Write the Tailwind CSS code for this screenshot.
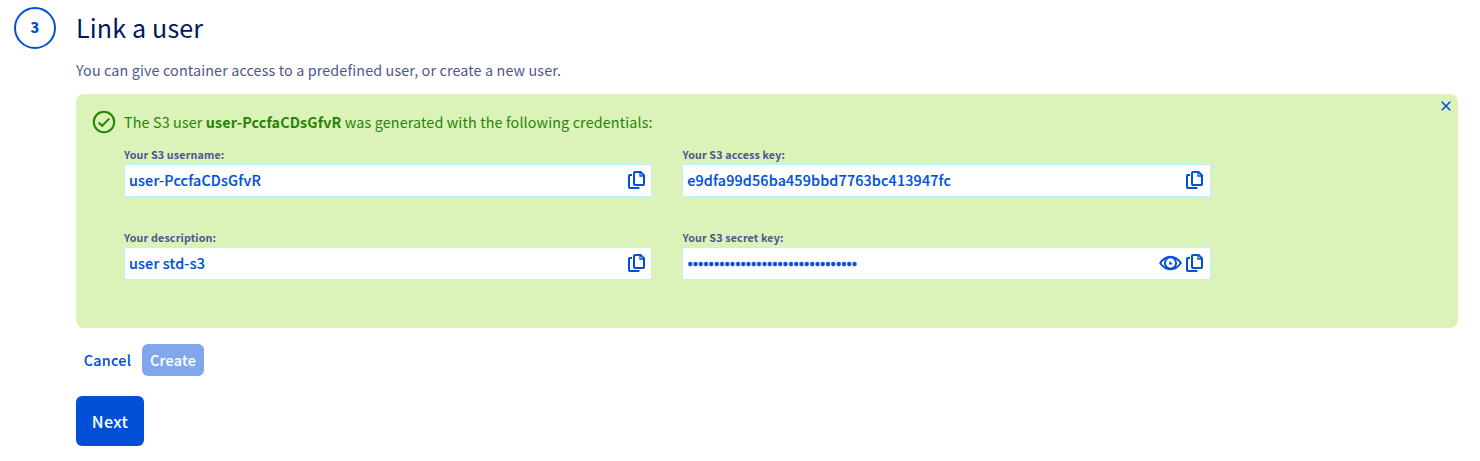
<!DOCTYPE html>
<html lang="en">
<head>
<meta charset="utf-8">
<title>Link a user</title>
<script src="https://cdn.jsdelivr.net/npm/@tailwindcss/browser@4"></script>
</head>
<body class="bg-white font-['Noto_Sans_CJK_SC',sans-serif] text-[14.32px] leading-6 tracking-[0.14px] text-[#4d5592]">
<svg class="hidden">
  <symbol id="copy" viewBox="0 0 17 18" fill="none" stroke="currentColor" stroke-width="2">
    <path d="M4 4H1.8Q1 4 1 4.8V16.2Q1 17 1.8 17H11.4"/>
    <path d="M7 1H12.6L16 4.4V13.2Q16 14 15.2 14H7Q6 14 6 13V2Q6 1 7 1Z"/>
    <path d="M12 1V5H16" stroke-width="1.3"/>
  </symbol>
</svg>
<main class="flex gap-5 pl-3.5 pr-[22px] pt-[7px]">
  <div class="flex size-[42px] shrink-0 items-center justify-center rounded-full border-2 border-[#0050d7] pb-0.5 text-[14.32px] font-black text-[#0050d7]">3</div>
  <section class="min-w-0 flex-1">
    <h1 class="pt-px text-[25.1px] leading-[38px] text-[#00185e]">Link a user</h1>
    <p class="mt-3">You can give container access to a predefined user, or create a new user.</p>

    <div class="mt-3 h-[234px] rounded-lg bg-[#dbf2b9] pl-4 pr-[7px] pt-[6px]">
      <div class="flex h-[22px] items-start">
        <svg class="mt-2.5 size-6 shrink-0 text-[#268403]" viewBox="0 0 24 24" fill="none" stroke="currentColor" stroke-width="2"><circle cx="12" cy="12" r="10.2"/><path d="M6.6 12.4 10.2 15.8 17.3 8.6"/></svg>
        <p class="ml-2 mt-2.5 flex-1 text-[#268403]">The S3 user <strong>user-PccfaCDsGfvR</strong> was generated with the following credentials:</p>
        <button class="mt-px flex size-[10px] items-center justify-center" aria-label="Close"><svg class="size-[10px] shrink-0 text-[#0050d7]" viewBox="0 0 10 10" stroke="currentColor" stroke-width="1.6"><path d="M.8 .8 9.2 9.2M9.2 .8 .8 9.2"/></svg></button>
      </div>
      <div class="ml-8 mt-6 grid w-[1087px] grid-cols-[528px_529px] gap-x-[30px] gap-y-8 text-[#0050d7]">
        <div>
          <label class="block pb-px text-[10.74px] font-bold leading-[17px] text-[#4d5592]">Your S3 username:</label>
          <div class="flex h-[33px] items-center border border-[#bef1ff] bg-white pb-px pl-1 pr-[6px] font-medium tracking-[0.18px] [-webkit-text-stroke:0.15px]"><span class="flex-1">user-PccfaCDsGfvR</span><svg class="h-[18px] w-[17px]"><use href="#copy"/></svg></div>
        </div>
        <div>
          <label class="block pb-px pl-[0.4px] text-[10.74px] font-bold leading-[17px] text-[#4d5592]">Your S3 access key:</label>
          <div class="flex h-[33px] items-center border border-[#bef1ff] bg-white pb-px pl-[4.2px] pr-[7px] font-medium tracking-[0.17px] [-webkit-text-stroke:0.15px]"><span class="flex-1">e9dfa99d56ba459bbd7763bc413947fc</span><svg class="h-[18px] w-[17px]"><use href="#copy"/></svg></div>
        </div>
        <div>
          <label class="block pb-px text-[10.74px] font-bold leading-[17px] text-[#4d5592]">Your description:</label>
          <div class="flex h-[33px] items-center border border-[#bef1ff] bg-white pb-px pl-1 pr-[6px] font-medium tracking-[0.18px] [-webkit-text-stroke:0.15px]"><span class="flex-1">user std-s3</span><svg class="h-[18px] w-[17px]"><use href="#copy"/></svg></div>
        </div>
        <div>
          <label class="block pb-px pl-[0.4px] text-[10.74px] font-bold leading-[17px] text-[#4d5592]">Your S3 secret key:</label>
          <div class="flex h-[33px] items-center border border-[#bef1ff] bg-white pb-px pl-[4.4px] pr-[7px] font-medium"><span class="mt-0.5 flex-1 font-['Noto_Sans',sans-serif] text-[14px] tracking-[0.04px] [-webkit-text-stroke:0.7px]">••••••••••••••••••••••••••••••••</span><svg class="mr-1 h-4 w-[23px]" viewBox="0 0 23 16" fill="none" stroke="currentColor" stroke-width="1.9"><path d="M1.2 8C6.6-.4 16.4-.4 21.8 8 16.4 16.4 6.6 16.4 1.2 8Z"/><circle cx="11.5" cy="8" r="5.6"/><path d="M11 6.4V8.8H13.2" stroke-width="1.6"/></svg><svg class="h-[18px] w-[17px]"><use href="#copy"/></svg></div>
        </div>
      </div>
    </div>

    <div class="mt-4 flex h-8 items-center font-medium [-webkit-text-stroke:0.1px]">
      <button class="w-[62px] pl-px text-[#0050d7] tracking-[0.3px]">Cancel</button>
      <button class="ml-1 h-8 w-[62px] rounded-md bg-[#80a7eb] text-white tracking-[0.3px]">Create</button>
    </div>
    <button class="mt-5 h-[50px] w-[68px] rounded-md bg-[#0050d7] text-[16.1px] font-medium tracking-[0.3px] text-white">Next</button>
  </section>
</main>
</body>
</html>
